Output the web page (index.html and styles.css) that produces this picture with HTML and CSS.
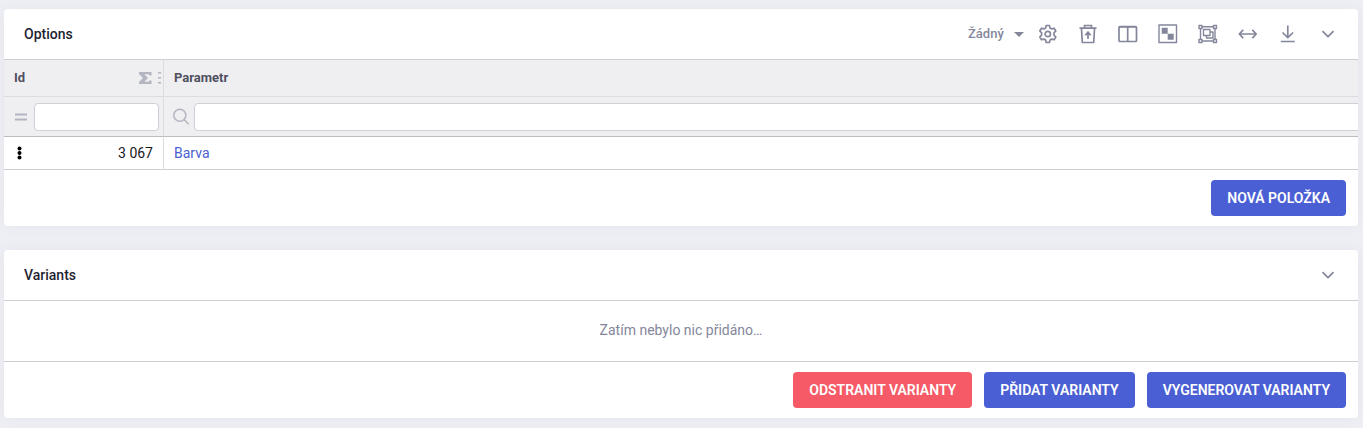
FILE: index.html
```html
<!doctype html>
<html lang="cs">
<head>
    <meta charset="UTF-8">
    <meta name="viewport" content="width=device-width, initial-scale=1.0">
    <title>Options</title>
    <link rel="stylesheet" href="styles.css">
</head>
<body>
    <section class="panel">
        <header class="panel-head">
            <h2 class="panel-title">Options</h2>
            <div class="toolbar">
                <div class="preset">
                    <select class="preset-select" aria-label="Filtr">
                        <option>Žádný</option>
                    </select>
                    <svg class="caret" viewBox="0 0 10 5"><path d="M0 0h10L5 5z"/></svg>
                </div>
                <button class="tool" type="button" aria-label="Nastavení">
                    <svg viewBox="0 0 20 20"><path d="M8.200 1.500h3.200l.6 2.400 1.700 1 2.400-.7 1.700 2.800-1.800 1.800v2.400l1.800 1.800-1.700 2.800-2.400-.7-1.700 1-.6 2.400H8.200l-.6-2.400-1.700-1-2.400.7L1.800 13l1.800-1.800V8.800L1.800 7l1.700-2.800 2.400.7 1.700-1z"/><circle cx="9.800" cy="10" r="2.700"/></svg>
                </button>
                <button class="tool" type="button" aria-label="Koš">
                    <svg viewBox="0 0 20 20"><path d="M1.500 4.200h17M6.500 4V1.500h7V4M3.500 4.500l.8 14h11.400l.8-14"/><path d="M10 15V9"/><path class="fill" d="M10 6.800l3.700 4.500H6.300z"/></svg>
                </button>
                <button class="tool" type="button" aria-label="Sloupce">
                    <svg viewBox="0 0 20 20"><rect x="1" y="2.500" width="17.500" height="15" rx="1"/><path d="M1 3h17.500M9.700 3v14"/></svg>
                </button>
                <button class="tool" type="button" aria-label="Výběr">
                    <svg class="thin" viewBox="0 0 20 20"><rect x="1" y="1" width="17.500" height="17.500"/><path class="fill" d="M3.700 3.700h6v6h-6zM9.700 9.700h6v6h-6z"/></svg>
                </button>
                <button class="tool" type="button" aria-label="Seskupit">
                    <svg class="thin" viewBox="0 0 20 20"><path d="M4 2.800h11.500M4 17h11.500M2.500 4v12M17 4v12"/><path d="M1 1.500h3v3H1zM15.500 1.500h3v3h-3zM1 15.500h3v3H1zM15.500 15.500h3v3h-3zM5.500 5.500h6.500v6H5.500zM12 8h3v6H8.500v-2.500"/></svg>
                </button>
                <button class="tool" type="button" aria-label="Šířka">
                    <svg viewBox="0 0 20 20"><path d="M1.500 10h16.500M5.200 5.800L1.300 10l3.900 4.200M14.300 5.800l3.900 4.200-3.900 4.200"/></svg>
                </button>
                <button class="tool" type="button" aria-label="Export">
                    <svg viewBox="0 0 20 20"><path d="M9.800 1.500v12M4.500 8.500l5.300 5.200 5.300-5.200M2.800 17.500h14"/></svg>
                </button>
                <button class="tool" type="button" aria-label="Sbalit">
                    <svg viewBox="0 0 20 20"><path d="M4.500 7.200L10 12.600l5.500-5.400"/></svg>
                </button>
            </div>
        </header>
        <table class="grid">
            <thead>
                <tr class="grid-head">
                    <th class="col-id">
                        <div class="cell">
                            <span>Id</span>
                            <span class="marks">
                                <svg class="sigma" viewBox="0 0 13 12"><path d="M0 0h12.500v3.500h-2L9.800 2.200H5.300L9 6 5.300 9.800h4.500l.7-1.300h2V12H0v-2l4-4-4-4z"/></svg>
                                <svg class="grip" viewBox="0 0 4 12"><path d="M0 0h3v1.500H0zM0 5h3v1.500H0zM0 10h3v1.500H0z"/></svg>
                            </span>
                        </div>
                    </th>
                    <th>
                        <div class="cell">Parametr</div>
                    </th>
                </tr>
                <tr class="grid-filter">
                    <td class="col-id">
                        <div class="filter">
                            <svg class="filter-icon" viewBox="0 0 20 20"><path d="M4 7.500h12M4 12.500h12"/></svg>
                            <input class="filter-input" type="text" aria-label="Id">
                        </div>
                    </td>
                    <td>
                        <div class="filter filter-open">
                            <svg class="filter-icon thin" viewBox="0 0 20 20"><circle cx="8.800" cy="8.300" r="6"/><path d="M13.200 12.700l4.500 4.500"/></svg>
                            <input class="filter-input" type="text" aria-label="Parametr">
                        </div>
                    </td>
                </tr>
            </thead>
            <tbody>
                <tr class="grid-row">
                    <td class="col-id">
                        <div class="cell">
                            <button class="row-menu" type="button" aria-label="Menu">
                                <svg viewBox="0 0 10 14"><circle cx="5.500" cy="2.500" r="2"/><circle cx="5.500" cy="7" r="2"/><circle cx="5.500" cy="11.500" r="2"/></svg>
                            </button>
                            <span>3 067</span>
                        </div>
                    </td>
                    <td>
                        <div class="cell"><a class="link" href="#">Barva</a></div>
                    </td>
                </tr>
            </tbody>
        </table>
        <footer class="panel-foot">
            <button class="btn" type="button">Nová položka</button>
        </footer>
    </section>

    <section class="panel">
        <header class="panel-head">
            <h2 class="panel-title">Variants</h2>
            <div class="toolbar">
                <button class="tool" type="button" aria-label="Sbalit">
                    <svg viewBox="0 0 20 20"><path d="M4.500 7.200L10 12.600l5.500-5.400"/></svg>
                </button>
            </div>
        </header>
        <p class="empty">Zatím nebylo nic přidáno…</p>
        <footer class="panel-foot">
            <button class="btn btn-danger" type="button">Odstranit varianty</button>
            <button class="btn" type="button">Přidat varianty</button>
            <button class="btn" type="button">Vygenerovat varianty</button>
        </footer>
    </section>
</body>
</html>
```
FILE: styles.css
```css
*{
    box-sizing: border-box;
    margin: 0;
    padding: 0;
}
body{
    padding: 9px 5px 10px 4px;
    background: #eeeff5;
    color: #1f1f33;
    font: 14px/20px Roboto, "Liberation Sans", sans-serif;
}
button, input, select{
    font: inherit;
    color: inherit;
}
button{
    border: none;
    background: none;
    cursor: pointer;
}
svg{
    display: block;
}

/* panel */
.panel{
    background: #ffffff;
    border-radius: 4px;
    box-shadow: 0 0 14px rgba(82, 63, 105, 0.06);
    overflow: hidden;
}
.panel + .panel{
    margin-top: 24px;
}
.panel-head{
    display: flex;
    align-items: center;
    justify-content: space-between;
    padding: 15px 20px;
    border-bottom: 1px solid #cfcfd3;
}
.panel-title{
    font-size: 14px;
    font-weight: 500;
}
.panel-foot{
    display: flex;
    justify-content: flex-end;
    gap: 12px;
    padding: 10px 12px;
}

/* toolbar */
.toolbar{
    display: flex;
    align-items: center;
    gap: 20px;
    color: #84879b;
}
.tool{
    width: 20px;
    height: 20px;
}
.tool svg{
    width: 20px;
    height: 20px;
    fill: none;
    stroke: currentColor;
    stroke-width: 1.7;
    stroke-linejoin: round;
}
.tool .thin{
    stroke-width: 1.4;
}
.tool .fill{
    fill: currentColor;
    stroke: none;
}
.preset{
    display: flex;
    align-items: center;
    margin-right: -6px;
}
.preset-select{
    appearance: none;
    width: 46px;
    border: none;
    background: none;
    font-size: 13px;
    font-weight: 500;
}
.caret{
    width: 10px;
    height: 5px;
    fill: currentColor;
}

/* grid */
.grid{
    width: 100%;
    table-layout: fixed;
    border-collapse: separate;
    border-spacing: 0;
}
.col-id{
    width: 160px;
    border-right: 1px solid #dcdce0;
}
.cell{
    display: flex;
    align-items: center;
    justify-content: space-between;
    padding: 0 10px;
}
.grid-head th{
    height: 37px;
    background: #efeff1;
    border-bottom: 1px solid #dcdce0;
    color: #4f5060;
    font-size: 13px;
    font-weight: 700;
    text-align: left;
}
.grid-head .col-id .cell{
    padding-right: 1px;
}
.marks{
    display: flex;
    gap: 6px;
    fill: #b3b5c0;
}
.sigma{
    width: 13px;
    height: 12px;
}
.grip{
    width: 4px;
    height: 12px;
}
.grid-filter td{
    height: 40px;
    background: #efeff1;
    border-bottom: 1px solid #bcbcc0;
    overflow: hidden;
}
.filter{
    display: flex;
    align-items: center;
    padding: 0 4px 0 7px;
    gap: 3px;
}
.filter-open{
    margin-right: -8px;
    padding-right: 0;
}
.filter-icon{
    flex: none;
    width: 20px;
    height: 20px;
    fill: none;
    stroke: #b3b5c0;
    stroke-width: 1.8;
}
.filter-icon.thin{
    stroke-width: 1.5;
}
.filter-input{
    flex: 1;
    min-width: 0;
    height: 28px;
    padding: 0 8px;
    border: 1px solid #d0d0d8;
    border-radius: 4px;
    background: #ffffff;
}
.grid-row td{
    height: 33px;
    border-bottom: 1px solid #cfcfd3;
    color: #17171c;
}
.row-menu{
    width: 10px;
    height: 14px;
}
.link{
    color: #4a5fd3;
    text-decoration: none;
}

.empty{
    padding: 19px 20px 21px;
    border-bottom: 1px solid #cfcfd3;
    color: #84879b;
    text-align: center;
}

/* buttons */
.btn{
    height: 36px;
    padding: 0 16px;
    border-radius: 4px;
    background: #4a5fd3;
    color: #ffffff;
    font-weight: 600;
    text-transform: uppercase;
}
.btn-danger{
    background: #f55a66;
}
```
